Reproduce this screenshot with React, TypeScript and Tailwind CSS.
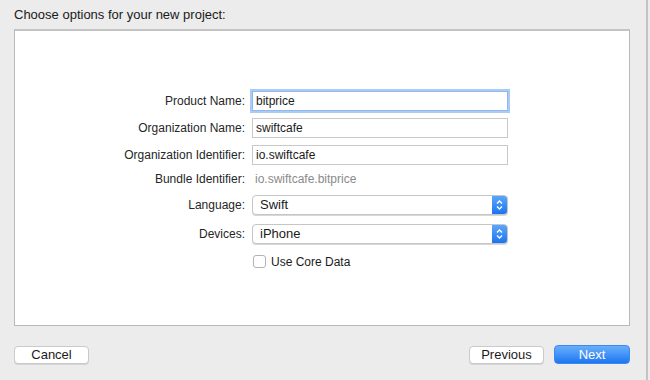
import React from "react";

const font = { fontFamily: '"Liberation Sans", Arial, sans-serif' };

function Row({ label, children, h = 27 }: { label: string; children: React.ReactNode; h?: number }) {
  return (
    <div className="flex items-center" style={{ height: h }}>
      <div className="w-[231px] text-right pr-[7px] text-[12px] text-[#262626]">{label}</div>
      {children}
    </div>
  );
}

function TextField({ value, focused }: { value: string; focused?: boolean }) {
  return (
    <div
      className={
        "w-[256px] h-[20px] flex items-center px-[3px] text-[12px] text-[#1a1a1a] bg-white " +
        (focused
          ? "border border-[#8fb8ec] shadow-[0_0_0_2px_#a9cbf5]"
          : "border border-[#c9c9c9]")
      }
    >
      {value}
    </div>
  );
}

function PopUp({ value }: { value: string }) {
  return (
    <div className="w-[256px] h-[20px] flex rounded-[4px] bg-white border border-[#c6c6c6] shadow-[0_1px_0_#d8d8d8] overflow-hidden">
      <div className="flex-1 flex items-center pl-[7px] text-[13px] text-[#1a1a1a]">{value}</div>
      <div className="w-[15px] h-full bg-gradient-to-b from-[#5aa6fb] to-[#1a74f0] flex items-center justify-center">
        <svg width="7" height="12" viewBox="0 0 7 12" fill="none" stroke="white" strokeWidth="1.3">
          <path d="M1 4.5 L3.5 2 L6 4.5" />
          <path d="M1 7.5 L3.5 10 L6 7.5" />
        </svg>
      </div>
    </div>
  );
}

export default function App() {
  return (
    <div style={font} className="w-[650px] h-[380px] bg-[#ececec] relative overflow-hidden">
      <div className="w-[648px] h-full border-r-2 border-[#c4c4c4] flex flex-col">
        <div className="h-[29px] pl-[14px] pt-[5px] text-[13px] text-[#1a1a1a]">Choose options for your new project:</div>
        <div className="ml-[14px] w-[616px] h-[297px] bg-white border border-[#b9b9b9] border-t-2 border-t-[#c4c4c4] pt-[56px] pl-[6px]">
          <Row label="Product Name:">
            <TextField value="bitprice" focused />
          </Row>
          <Row label="Organization Name:">
            <TextField value="swiftcafe" />
          </Row>
          <Row label="Organization Identifier:">
            <TextField value="io.swiftcafe" />
          </Row>
          <Row label="Bundle Identifier:" h={22}>
            <div className="pl-[3px] text-[12px] text-[#8a8a8a]">io.swiftcafe.bitprice</div>
          </Row>
          <Row label="Language:" h={29}>
            <PopUp value="Swift" />
          </Row>
          <Row label="Devices:" h={30}>
            <PopUp value="iPhone" />
          </Row>
          <div className="flex items-center h-[25px] pl-[232px]">
            <div className="w-[13px] h-[13px] rounded-[3px] border border-[#b3b3b3] bg-white" />
            <span className="ml-[5px] text-[12px] text-[#1a1a1a]">Use Core Data</span>
          </div>
        </div>
        <div className="flex items-center pl-[14px] pr-[16px] mt-[19px]">
          <button className="w-[75px] h-[18px] rounded-[4px] bg-white border border-[#cacaca] shadow-[0_1px_0_#d4d4d4] text-[13px] text-[#1a1a1a] leading-none">
            Cancel
          </button>
          <div className="flex-1" />
          <button className="w-[75px] h-[18px] rounded-[4px] bg-white border border-[#cacaca] shadow-[0_1px_0_#d4d4d4] text-[13px] text-[#1a1a1a] leading-none">
            Previous
          </button>
          <button className="ml-[10px] w-[76px] h-[19px] rounded-[4px] bg-gradient-to-b from-[#67aefa] to-[#1b76f1] border border-[#3b8af0] text-[13px] text-white leading-none">
            Next
          </button>
        </div>
      </div>
    </div>
  );
}
